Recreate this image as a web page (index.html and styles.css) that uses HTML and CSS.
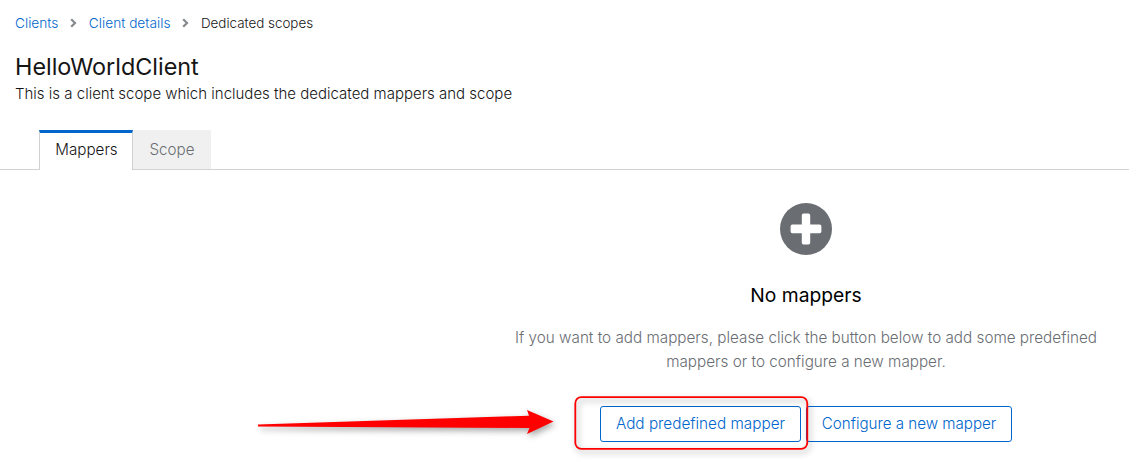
FILE: index.html
```html
<!DOCTYPE html>
<html lang="en">
<head>
<meta charset="utf-8">
<title>Dedicated scopes</title>
<link rel="stylesheet" href="styles.css">
</head>
<body>
<header class="header">
  <nav class="breadcrumb">
    <a class="link" href="#">Clients</a>
    <svg class="chevron" viewBox="0 0 7 10"><path d="M1.2 1.2 5 5 1.2 8.8"/></svg>
    <a class="link" href="#">Client details</a>
    <svg class="chevron" viewBox="0 0 7 10"><path d="M1.2 1.2 5 5 1.2 8.8"/></svg>
    <span class="current">Dedicated scopes</span>
  </nav>
  <h1 class="title">HelloWorldClient</h1>
  <p class="subtitle">This is a client scope which includes the dedicated mappers and scope</p>
</header>
<div class="tabs">
  <button class="tab active">Mappers</button>
  <button class="tab">Scope</button>
</div>
<main class="empty">
  <svg class="plus" viewBox="0 0 52 52"><circle cx="26" cy="26" r="26"/><path d="M23.5 10.5h5a1.7 1.7 0 0 1 1.7 1.7v9.4h9.5a1.7 1.7 0 0 1 1.7 1.7v5.2a1.7 1.7 0 0 1-1.7 1.7h-9.5v9.5a1.7 1.7 0 0 1-1.7 1.7h-5a1.7 1.7 0 0 1-1.7-1.7v-9.5h-9.5a1.7 1.7 0 0 1-1.7-1.7v-5.2a1.7 1.7 0 0 1 1.7-1.7h9.5v-9.4a1.7 1.7 0 0 1 1.7-1.7z"/></svg>
  <h2 class="heading">No mappers</h2>
  <p class="message">If you want to add mappers, please click the button below to add some predefined<br>mappers or to configure a new mapper.</p>
  <div class="actions">
    <button class="button add">Add predefined mapper</button>
    <button class="button configure">Configure a new mapper</button>
  </div>
</main>
<svg class="annotation" viewBox="0 0 1129 466">
  <path class="arrow" d="M258 424.4 529 415.7 527 410 553.5 421.5 527 434 529.5 428 258 426.6z"/>
  <rect class="frame" x="575.3" y="397.2" width="232" height="51.6" rx="6"/>
</svg>
</body>
</html>
```
FILE: styles.css
```css
* {
  box-sizing: border-box;
}

body {
  margin: 0;
  width: 1129px;
  height: 466px;
  overflow: hidden;
  background: #fff;
  color: #151515;
  font-family: Inter, "Open Sans", sans-serif;
  font-weight: 300;
}

h1, h2, p {
  margin: 0;
}

.header {
  height: 130px;
  padding: 12px 15px 0;
}

.breadcrumb {
  display: flex;
  align-items: center;
  height: 21px;
  font-size: 13.7px;
  white-space: nowrap;
}

.link {
  color: #06c;
  text-decoration: none;
}

.chevron {
  width: 7px;
  height: 10px;
  margin: 1px 12px 0 11.5px;
  fill: none;
  stroke: #86898d;
  stroke-width: 2.2;
}

.current {
  font-size: 13.4px;
}

.title {
  margin-top: 18px;
  font-size: 23.4px;
  font-weight: 400;
  line-height: 31px;
}

.subtitle {
  font-size: 15px;
  line-height: 24px;
}

.tabs {
  display: flex;
  height: 40px;
  padding-left: 39px;
  border-bottom: 1px solid #d2d2d2;
}

.tab {
  width: 78px;
  height: 39px;
  padding: 0;
  border: 0;
  background: #f0f0f0;
  color: #6a6e73;
  font: 300 15.2px/39px Inter, sans-serif;
}

.tab.active {
  width: 94px;
  height: 40px;
  padding: 0 0 3px 1px;
  border: 1px solid #d2d2d2;
  border-top: 3px solid #06c;
  border-bottom: 0;
  background: #fff;
  color: #151515;
  line-height: 34px;
}

.empty {
  display: flex;
  flex-direction: column;
  align-items: center;
  margin-left: 483px;
  padding-top: 33px;
}

.plus {
  width: 52px;
  height: 52px;
  fill: #6a6e73;
}

.plus path {
  fill: #fff;
}

.heading {
  margin-top: 25px;
  color: #000;
  font-size: 19.3px;
  font-weight: 400;
  line-height: 30px;
}

.message {
  margin-top: 16px;
  color: #6a6e73;
  font-size: 15.25px;
  line-height: 24px;
  text-align: center;
  white-space: nowrap;
}

.actions {
  display: flex;
  gap: 5px;
  margin-top: 32px;
}

.button {
  height: 36px;
  padding: 0;
  border: 1px solid #06c;
  border-radius: 3px;
  background: #fff;
  color: #06c;
  font: 300 15.3px/34px Inter, sans-serif;
}

.add {
  width: 201px;
}

.configure {
  width: 206px;
  font-size: 15.15px;
}

.annotation {
  position: absolute;
  top: 0;
  left: 0;
  width: 1129px;
  height: 466px;
  pointer-events: none;
  filter: drop-shadow(2px 3px 3px rgba(0, 0, 0, .35));
}

.arrow {
  fill: #f00;
}

.frame {
  fill: none;
  stroke: #f00;
  stroke-width: 1.8;
}
```
